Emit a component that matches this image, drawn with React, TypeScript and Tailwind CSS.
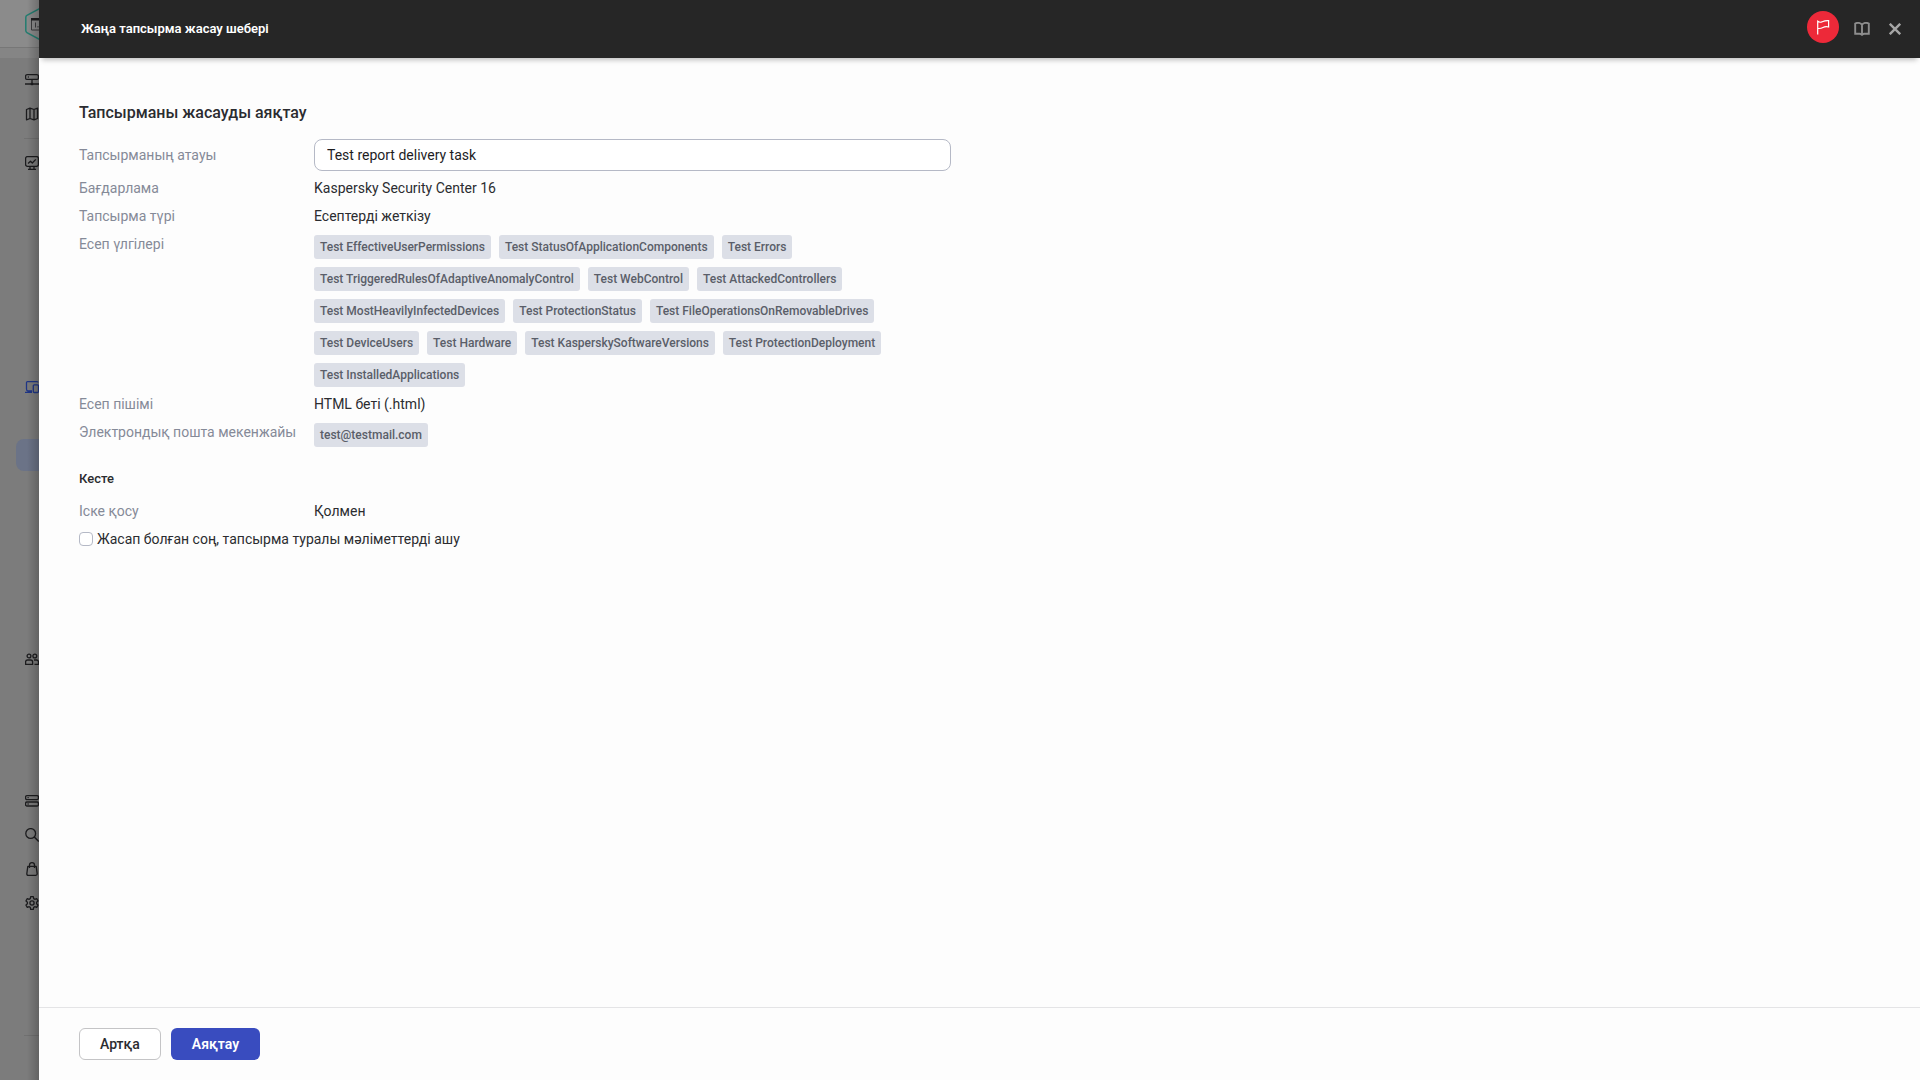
import { useState } from 'react';
import type { ReactNode } from 'react';

const reports = [
  'Test EffectiveUserPermissions',
  'Test StatusOfApplicationComponents',
  'Test Errors',
  'Test TriggeredRulesOfAdaptiveAnomalyControl',
  'Test WebControl',
  'Test AttackedControllers',
  'Test MostHeavilyInfectedDevices',
  'Test ProtectionStatus',
  'Test FileOperationsOnRemovableDrives',
  'Test DeviceUsers',
  'Test Hardware',
  'Test KasperskySoftwareVersions',
  'Test ProtectionDeployment',
  'Test InstalledApplications',
];

function Icon({ children }: { children: ReactNode }) {
  return (
    <svg
      viewBox="0 0 14 14"
      className="h-3.5 w-3.5 shrink-0"
      fill="none"
      stroke="currentColor"
      strokeWidth="1.3"
      strokeLinejoin="round"
    >
      {children}
    </svg>
  );
}

function NavItem({ label, className = '', children }: { label: string; className?: string; children: ReactNode }) {
  return (
    <a href="#" aria-label={label} className={`flex h-[34px] shrink-0 items-center pl-[25px] ${className}`}>
      <Icon>{children}</Icon>
    </a>
  );
}

function Sidebar() {
  return (
    <aside className="relative flex w-[39px] shrink-0 flex-col overflow-hidden bg-[#7c7c7c] text-[#1c1c1e]">
      <div className="h-12 shrink-0 border-b border-[#777] bg-[#8b8b8b] pt-2 pl-[25px]">
        <svg viewBox="0 0 28 32" className="h-8 w-7" fill="none">
          <path d="M14 .9 1.9 7.4Q.8 8 .8 9.400V22.600Q.8 24 1.900 24.600L14 31.100 26.100 24.600Q27.200 24 27.200 22.600V9.400Q27.200 8 26.100 7.400Z" stroke="#237d70" strokeWidth="1.500" />
          <path d="M6.500 10.500h15v11.500h-15z" stroke="#3b3b3d" />
          <path d="M6 10h16v2.500H6z" fill="#1f1f21" />
          <path d="M10.500 14.500v5M13 18v1.500" stroke="#3b3b3d" />
        </svg>
      </div>
      <div className="h-[10px] shrink-0 bg-[#858585]" />

      <nav className="flex flex-1 flex-col pt-[5px]">
        <NavItem label="Сервер">
          <rect x=".6" y="1.600" width="12.800" height="4.800" rx="1.500" />
          <path d="M7 6.500v4.500M0 11h14M2.800 4h1" />
          <path d="M5.800 9.800h2.400v2.400H5.800z" fill="currentColor" stroke="none" />
        </NavItem>
        <NavItem label="Карта">
          <path d="M1.500 2.500 5 1.200l4 1.300 3.500-1.300v10.300L9 12.800l-4-1.300-3.500 1.300zM5 1.200v10.300M9 2.500v10.300" />
        </NavItem>
        <div className="mt-[7px] ml-6 h-px shrink-0 bg-[#707070]" />
        <NavItem label="Бақылау" className="mt-[7px]">
          <rect x=".6" y=".6" width="12.800" height="9.800" rx="1.800" />
          <path d="m3 7.500 2.500-2.200L7.300 7l3.500-3.600M5 10.500v2.800M9 10.500v2.800M3 13.400h8" />
        </NavItem>
        <NavItem label="Құрылғылар" className="mt-[190px] text-[#1f3585]">
          <path d="M1.500 9V2.600q0-1 1-1h9.500q1 0 1 1M0 12.400h7M1.500 9q0 2 1.500 2h4" />
          <rect x="8.300" y="4.800" width="5.200" height="7.700" rx="1" />
        </NavItem>
        <a href="#" aria-label="Тапсырмалар" className="mt-[35px] ml-4 h-8 w-40 shrink-0 rounded-lg bg-[#6b7387]" />
        <NavItem label="Пайдаланушылар" className="mt-[172px]">
          <circle cx="4" cy="3" r="1.900" />
          <circle cx="9.800" cy="3" r="1.900" />
          <path d="M.6 11.400V9q0-2 2-2h3q2 0 2 2v2.400zM9 7h2.500q2 0 2 2v2.400H9.500" />
        </NavItem>
        <NavItem label="Қоймалар" className="mt-[107px]">
          <rect x=".6" y="1.600" width="12.800" height="4" rx="1.300" />
          <rect x=".6" y="8" width="12.800" height="4" rx="1.300" />
          <path d="M2.500 3.600h1.200M2.500 10h1.200" />
        </NavItem>
        <NavItem label="Іздеу">
          <circle cx="5.700" cy="5.500" r="4.900" />
          <path d="m9.300 9 4.500 4.500" strokeWidth="1.500" />
        </NavItem>
        <NavItem label="Дүкен">
          <path d="M2.800 4.300h8.400l1 7.500q0 1.500-1.500 1.500H3.300q-1.500 0-1.500-1.500zM4.500 6V3q0-2.300 2.500-2.300T9.500 3v3" />
        </NavItem>
        <NavItem label="Параметрлер">
          <circle cx="7" cy="7" r="2.100" />
          <path d="M5.700.7h2.600l.4 1.900 1.100.7 1.900-.6 1.300 2.200L11.600 6.200v1.600L13 9.100l-1.300 2.200-1.900-.6-1.100.7-.4 1.900H5.700l-.4-1.900-1.100-.7-1.900.6L1 9.100l1.400-1.300V6.200L1 4.900l1.300-2.200 1.900.6 1.100-.7z" />
        </NavItem>
        <div className="mt-auto mb-11 ml-6 h-px shrink-0 bg-[#707070]" />
      </nav>
      <div className="pointer-events-none absolute inset-y-0 right-0 w-3 bg-linear-to-r from-transparent to-black/20" />
    </aside>
  );
}

function Header() {
  return (
    <header className="flex h-[58px] shrink-0 items-center bg-[#262626] pr-[19px] pl-[42px] shadow-[0_5px_5px_-3px_rgba(0,0,0,0.25)]">
      <h1 className="flex-1 text-[13px] font-semibold text-white">Жаңа тапсырма жасау шебері</h1>
      <button type="button" aria-label="Жалауша" className="mr-[15px] mb-1 flex h-8 w-8 items-center justify-center rounded-full bg-[#ed2939] text-white">
        <svg viewBox="0 0 14 16" className="h-4 w-3.5" fill="none" stroke="currentColor" strokeWidth="1.200">
          <path d="M1.700 15.500V2.300Q3.600 4 6.300 2.700T12.600 1.600V8Q9.500 7.200 7 8.500T1.700 9.400" />
        </svg>
      </button>
      <button type="button" aria-label="Анықтама" className="mr-[19px] text-[#8d8d8d]">
        <svg viewBox="0 0 16 14" className="h-3.5 w-4" fill="none" stroke="currentColor" strokeWidth="1.900">
          <path d="M8 2.500Q5-.2 1.200 1.500v10.300h4.300Q7 11.800 8 12.800q1-1 2.500-1h4.300V1.500Q11-.2 8 2.500zV12.500" />
        </svg>
      </button>
      <button type="button" aria-label="Жабу" className="text-[#a5a5a5]">
        <svg viewBox="0 0 12 12" className="h-3 w-3" fill="none" stroke="currentColor" strokeWidth="2.400">
          <path d="m.8.8 10.400 10.400M11.200.8.8 11.200" />
        </svg>
      </button>
    </header>
  );
}

function Tag({ children }: { children: ReactNode }) {
  return (
    <span className="h-6 rounded-[3px] bg-[#dcdfe7] px-1.5 text-xs leading-6 font-medium text-[#5a5e69]">{children}</span>
  );
}

function Row({ label, children }: { label: string; children: ReactNode }) {
  return (
    <div className="flex py-1">
      <dt className="w-[235px] shrink-0 text-[#858a98]">{label}</dt>
      <dd className="min-w-0 flex-1">{children}</dd>
    </div>
  );
}

export default function App() {
  const [name, setName] = useState('Test report delivery task');
  const [openAfter, setOpenAfter] = useState(false);

  return (
    <div className="flex min-h-screen bg-[#fdfdfd] font-[Roboto,'Noto_Sans',sans-serif] text-sm text-[#2b2c30]">
      <Sidebar />
      <div className="flex min-w-0 flex-1 flex-col">
        <Header />
        <main className="w-full max-w-[952px] flex-1 px-10 pt-[43px]">
          <h2 className="text-base leading-6 font-medium">Тапсырманы жасауды аяқтау</h2>

          <div className="mt-3.5 mb-[3px] flex items-center">
            <label htmlFor="task-name" className="w-[235px] shrink-0 text-[#858a98]">Тапсырманың атауы</label>
            <input
              id="task-name"
              type="text"
              value={name}
              onChange={(e) => setName(e.target.value)}
              className="h-8 min-w-0 flex-1 rounded-lg border border-[#b5b9c6] bg-white px-3 text-[#1d1d1f] outline-none"
            />
          </div>
          <dl>
            <Row label="Бағдарлама">Kaspersky Security Center 16</Row>
            <Row label="Тапсырма түрі">Есептерді жеткізу</Row>
            <Row label="Есеп үлгілері">
              <div className="mt-px -mb-px flex flex-wrap gap-2">
                {reports.map((report) => (
                  <Tag key={report}>{report}</Tag>
                ))}
              </div>
            </Row>
            <Row label="Есеп пішімі">HTML беті (.html)</Row>
            <Row label="Электрондық пошта мекенжайы">
              <div className="mt-px -mb-px flex">
                <Tag>test@testmail.com</Tag>
              </div>
            </Row>
          </dl>

          <h3 className="mt-[19px] mb-2 text-[13px] leading-5 font-medium">Кесте</h3>
          <dl>
            <Row label="Іске қосу">Қолмен</Row>
          </dl>
          <label className="flex items-center gap-1 py-1">
            <input
              type="checkbox"
              checked={openAfter}
              onChange={(e) => setOpenAfter(e.target.checked)}
              className="h-3.5 w-3.5 appearance-none rounded-[4px] border border-[#b5b9c6] bg-white checked:bg-[#394cbf]"
            />
            Жасап болған соң, тапсырма туралы мәліметтерді ашу
          </label>
        </main>
        <footer className="flex gap-2.5 border-t border-[#e4e4e6] px-10 py-5">
          <button type="button" className="h-8 rounded-md border border-[#c4c4c6] bg-white px-5 font-medium">Артқа</button>
          <button type="button" className="h-8 rounded-md bg-[#394cbf] px-[21px] font-semibold text-white">Аяқтау</button>
        </footer>
      </div>
    </div>
  );
}
